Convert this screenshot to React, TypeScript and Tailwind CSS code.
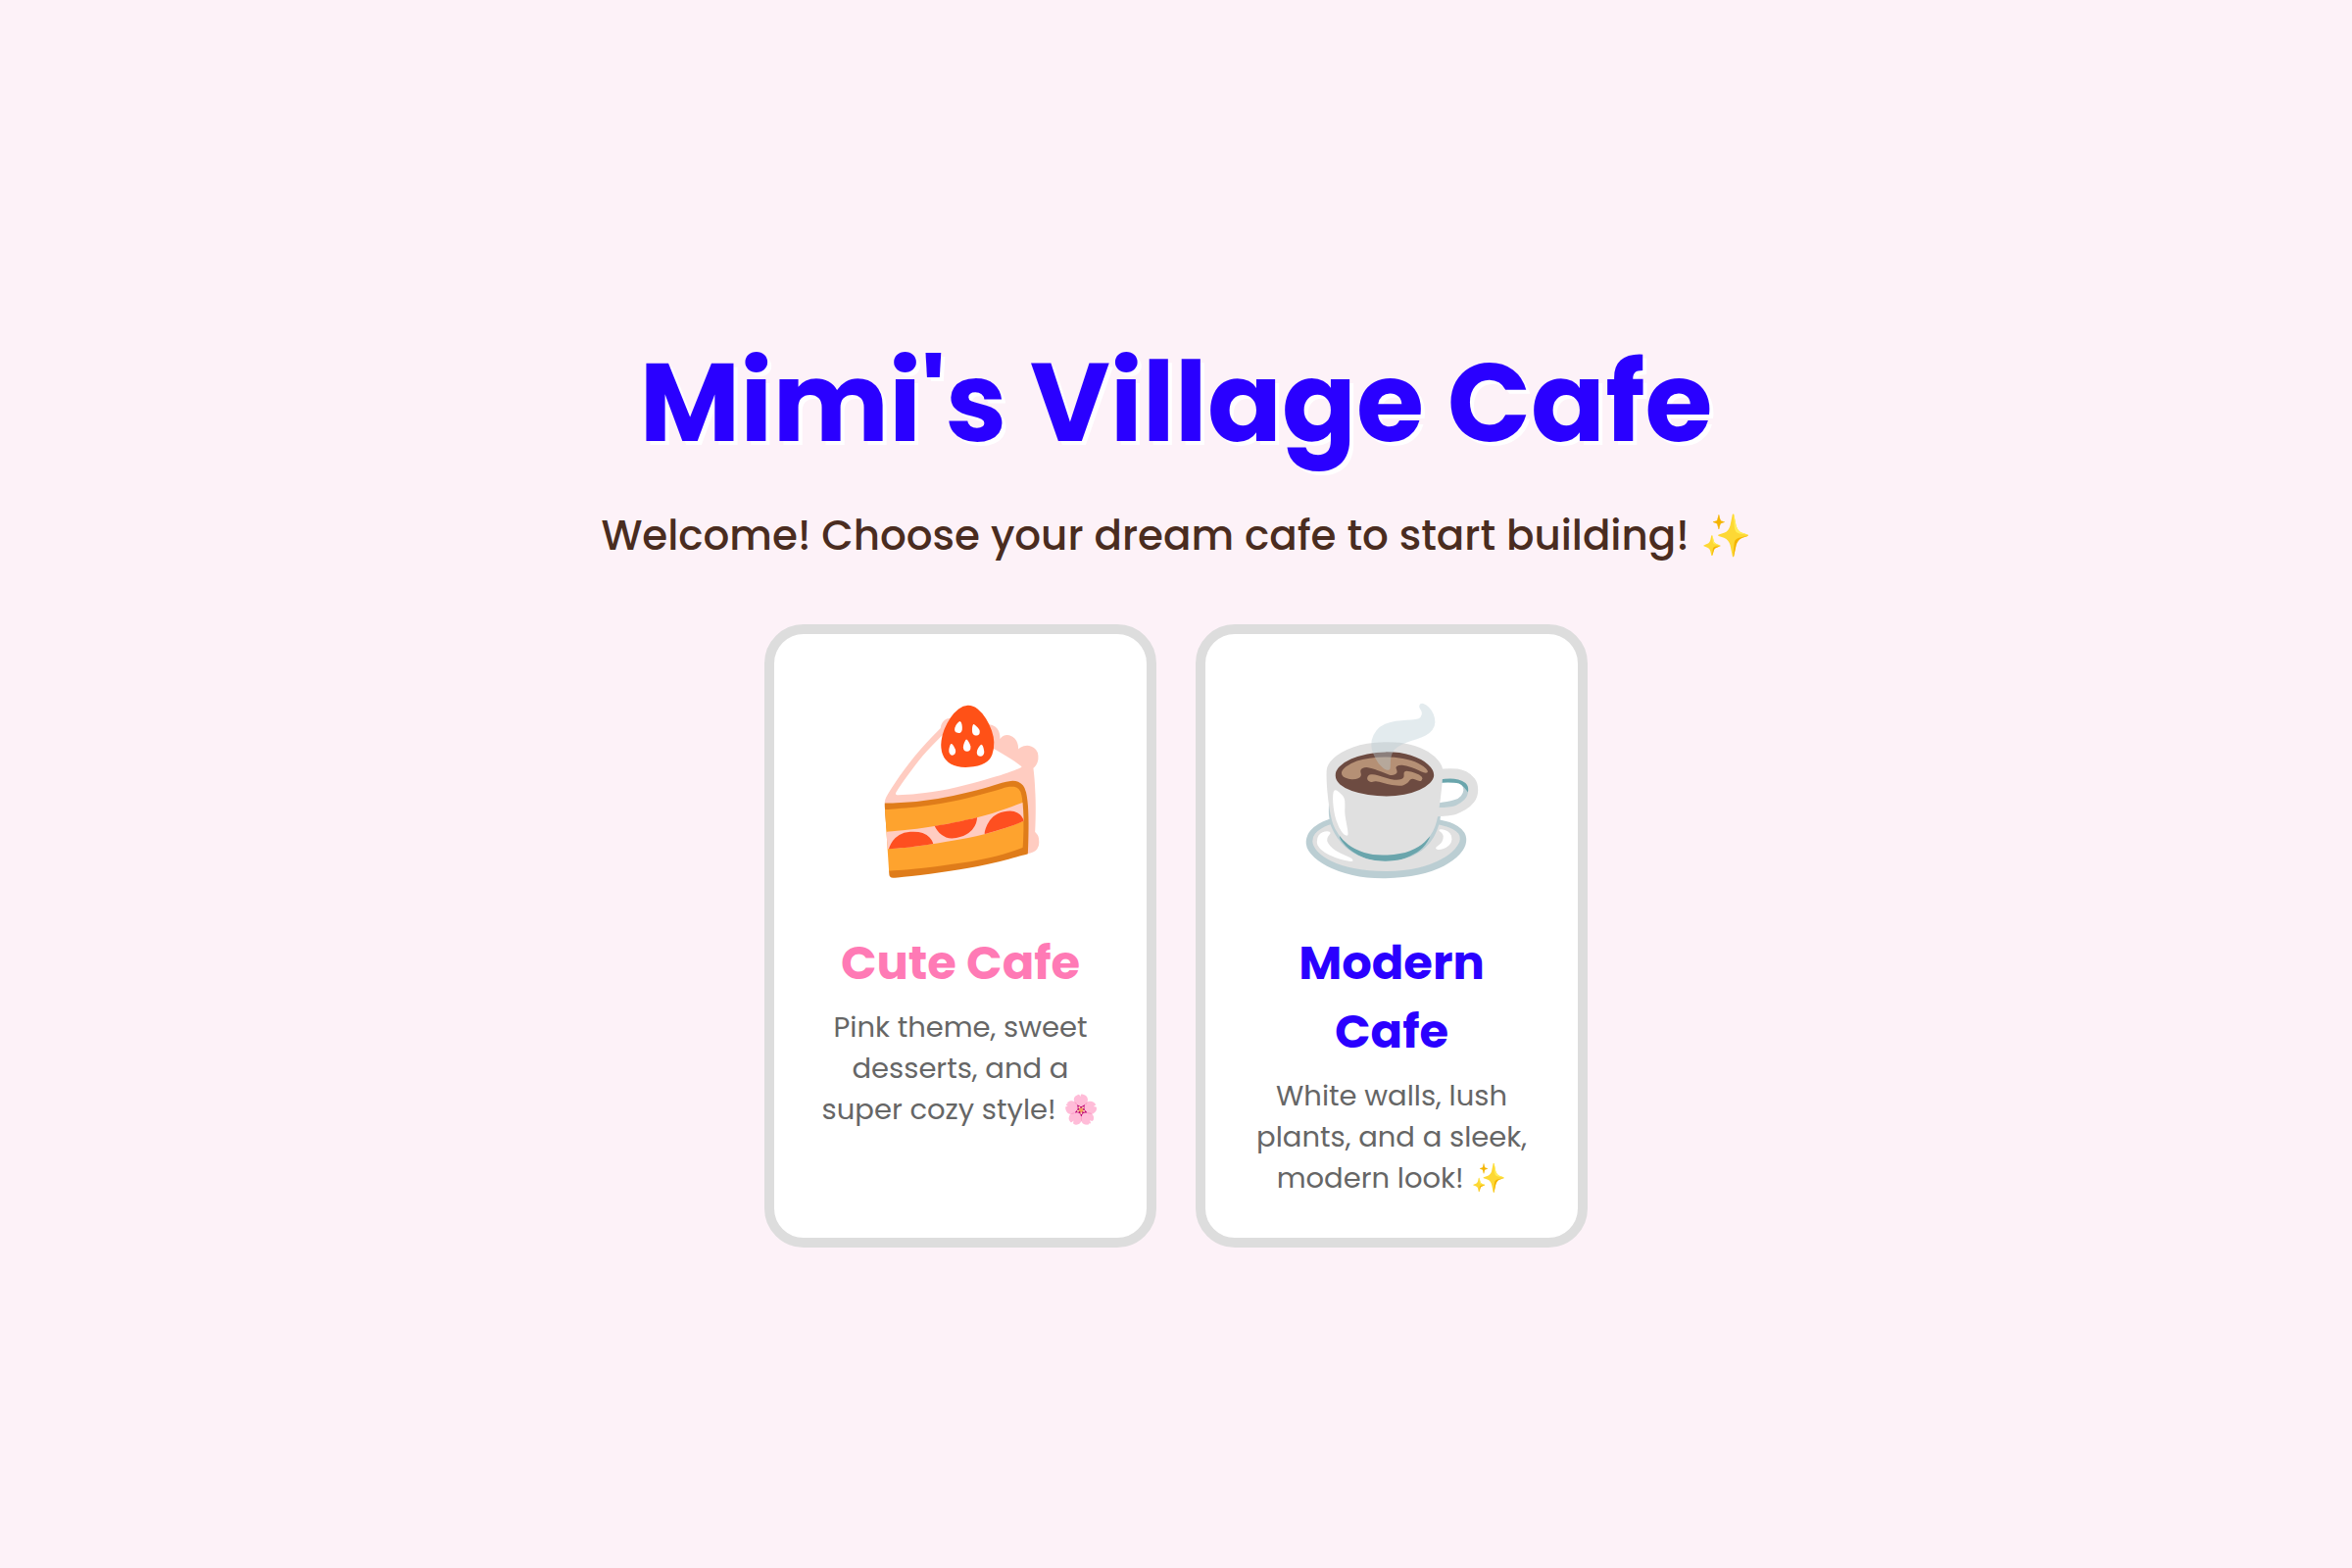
type Cafe = {
  emoji: string;
  name: string;
  titleClass: string;
  description: string;
};

const cafes: Cafe[] = [
  {
    emoji: "🍰",
    name: "Cute Cafe",
    titleClass: "text-[#ff7ab5]",
    description: "Pink theme, sweet desserts, and a super cozy style! 🌸",
  },
  {
    emoji: "☕",
    name: "Modern Cafe",
    titleClass: "text-[#2a00ff]",
    description: "White walls, lush plants, and a sleek, modern look! ✨",
  },
];

function CafeCard({ cafe }: { cafe: Cafe }) {
  return (
    <button
      type="button"
      className="flex w-100 cursor-pointer flex-col items-center rounded-[40px] border-10 border-[#dddddd] bg-white p-10 text-center"
    >
      <span className="mb-5 text-[160px] leading-[241px]">{cafe.emoji}</span>
      <span className={`mb-[9px] text-5xl leading-[70px] font-bold ${cafe.titleClass}`}>{cafe.name}</span>
      <span className="text-[29px] leading-[42px] text-[#666666]">{cafe.description}</span>
    </button>
  );
}

export default function App() {
  return (
    <main className="flex min-h-screen flex-col items-center justify-center bg-[#fdf2f8] font-['Poppins','Inter',sans-serif] antialiased">
      <h1 className="mb-5 text-center text-[112px] leading-[168px] font-bold text-[#2a00ff] [text-shadow:4px_4px_0_#ffffff]">
        Mimi's Village Cafe
      </h1>
      <p className="mb-[58px] text-center text-[42px] leading-16 font-medium text-[#4a2c20]">
        Welcome! Choose your dream cafe to start building! ✨
      </p>
      <div className="flex flex-wrap justify-center gap-10">
        {cafes.map((cafe) => (
          <CafeCard key={cafe.name} cafe={cafe} />
        ))}
      </div>
    </main>
  );
}
